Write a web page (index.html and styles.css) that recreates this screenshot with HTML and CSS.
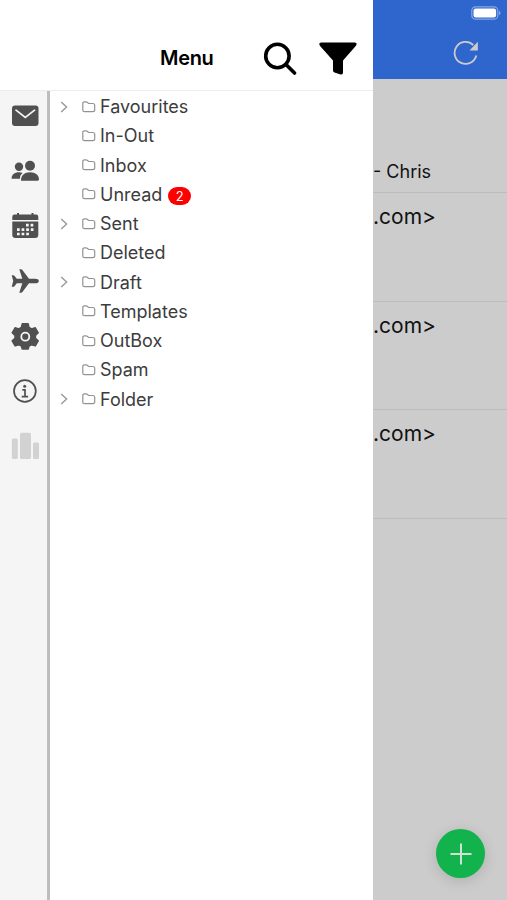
FILE: index.html
```
<!DOCTYPE html>
<html lang="en">
<head>
<meta charset="utf-8">
<title>Menu</title>
<link rel="stylesheet" href="styles.css">
</head>
<body>
<svg class="defs" aria-hidden="true">
  <symbol id="folder" viewBox="0 0 14 12"><path d="M.8 9.2V2.6Q.8.8 2.6.8H4q.8 0 1.3.5l.8.7q.6.5 1.4.5h3.3q1.9 0 1.9 1.9v4.4q0 1.9-1.9 1.9H2.6Q.8 10.700.8 9.200Z"/></symbol>
  <symbol id="chevron" viewBox="0 0 8 12"><path d="M1.200 1 6.600 6 1.200 11"/></symbol>
</svg>
<div class="screen">
  <aside class="drawer">
    <header class="head">
      <h1 class="title">Menu</h1>
      <svg class="search" viewBox="0 0 34 34"><circle cx="14.400" cy="14" r="11.700"/><path d="M23 22.500 31.500 31"/></svg>
      <svg class="filter" viewBox="0 0 38 33"><path d="M2.400.5H35.600Q38 .5 37.500 2.500 37.200 3.600 36.300 4.600L24 18.500V30.500Q24 33 21.500 32.400L15.500 30.600Q14 30 14 28.500V18.500L1.500 4.600Q.5 3.500.4 2.500 0 .5 2.400.5Z"/></svg>
    </header>
    <div class="body">
      <nav class="rail">
        <svg viewBox="0 0 28 28"><rect x="1" y="3.500" width="26.500" height="20.500" rx="3"/><path class="cut" d="m5 8.200 9.300 7.300L23.600 8.200"/></svg>
        <svg viewBox="0 0 28 28"><circle cx="8" cy="9.800" r="4.200"/><path d="M.6 21.700C.6 17.500 3.500 15.300 8 15.300q2.200 0 3.700.7C9.500 17.600 9 19.500 9 21.700Z"/><circle cx="19" cy="8.700" r="5"/><path d="M10 23.700C10 18.300 13.500 15.300 19 15.300s9 3 9 7q0 1.400-1.300 1.400Z"/></svg>
        <svg viewBox="0 0 28 28"><path d="M1.300 8V4.700Q1.300 2.500 3.500 2.500H6V1h2v1.500h12.500V1h2v1.500H25q2.300 0 2.300 2.200V8Z"/><path d="M1.300 9.500h26v13.300q0 3.200-3.200 3.200H4.500q-3.200 0-3.200-3.200Z"/><path class="days" d="M15 13.200h9M6 17.600h18M6 22h13.500"/></svg>
        <svg viewBox="0 0 28 28"><path d="M27.800 14q0 2.300-4 2.300H18l-6.600 8.800q-.5.700-1.300.7H8.300l3-9.500H5.800L3.400 19.200Q3 19.700 2.300 19.700H.7L2.200 14 .7 8.300h1.600q.7 0 1.100.5l2.400 2.900h5.500l-3-9.500h1.800q.8 0 1.300.7l6.600 8.800h5.800q4 0 4 2.300Z"/></svg>
        <svg viewBox="0 0 28 28"><path class="gear" d="M11.300 1.700h5.800l.9 3.800 2.600 1.500 3.700-1.200 2.900 5-2.800 2.600v2.900l2.800 2.600-2.900 5-3.700-1.200-2.600 1.500-.9 2.900h-5.800l-.9-2.900L7.800 22.700l-3.700 1.200-2.900-5L4 16.300v-2.900L1.200 10.800l2.900-5L7.800 7l2.600-1.500Z"/><circle class="hub" cx="14.300" cy="14.700" r="4"/></svg>
        <svg viewBox="0 0 28 28"><circle class="ring" cx="13.900" cy="14" r="10.900"/><circle cx="13.700" cy="9.300" r="1.500"/><path class="stem" d="M11.300 12.900h2.700v6.200M10.700 19.600h6.400"/></svg>
        <svg class="pale" viewBox="0 0 28 28"><rect x=".8" y="6.500" width="6" height="20.500" rx="1.500"/><rect x="9" y=".8" width="11" height="26.200" rx="1.500"/><rect x="22" y="10.500" width="6" height="16.500" rx="1.500"/></svg>
      </nav>
      <ul class="tree">
        <li><svg class="chev"><use href="#chevron"/></svg><svg class="fold"><use href="#folder"/></svg><span>Favourites</span></li>
        <li><i class="chev"></i><svg class="fold"><use href="#folder"/></svg><span>In-Out</span></li>
        <li><i class="chev"></i><svg class="fold"><use href="#folder"/></svg><span>Inbox</span></li>
        <li><i class="chev"></i><svg class="fold"><use href="#folder"/></svg><span>Unread</span><b class="badge">2</b></li>
        <li><svg class="chev"><use href="#chevron"/></svg><svg class="fold"><use href="#folder"/></svg><span>Sent</span></li>
        <li><i class="chev"></i><svg class="fold"><use href="#folder"/></svg><span>Deleted</span></li>
        <li><svg class="chev"><use href="#chevron"/></svg><svg class="fold"><use href="#folder"/></svg><span>Draft</span></li>
        <li><i class="chev"></i><svg class="fold"><use href="#folder"/></svg><span>Templates</span></li>
        <li><i class="chev"></i><svg class="fold"><use href="#folder"/></svg><span>OutBox</span></li>
        <li><i class="chev"></i><svg class="fold"><use href="#folder"/></svg><span>Spam</span></li>
        <li><svg class="chev"><use href="#chevron"/></svg><svg class="fold"><use href="#folder"/></svg><span>Folder</span></li>
      </ul>
    </div>
  </aside>
  <main class="page">
    <div class="bar">
      <svg class="battery" viewBox="0 0 30 14"><rect class="shell" x=".8" y=".8" width="26" height="12.400" rx="3.800"/><rect class="charge" x="2.500" y="2.500" width="22.600" height="9" rx="2.300"/><path class="tip" d="M28 4.800q1.600.8 1.600 2.200T28 9.200Z"/></svg>
      <svg class="refresh" viewBox="0 0 26 26"><path class="arc" d="M23.300 15.500A11 11 0 1 1 20.300 5"/><path class="arrow" d="M24.800 1.700V10.500H16.500Z"/></svg>
    </div>
    <div class="account">- Chris</div>
    <div class="mail">.com&gt;</div>
    <div class="mail">.com&gt;</div>
    <div class="mail">.com&gt;</div>
    <button class="add" aria-label="Add"><svg viewBox="0 0 22 22"><path d="M11 .5v21M.5 11h21"/></svg></button>
  </main>
</div>
</body>
</html>
```
FILE: styles.css
```
* { box-sizing: border-box; }
body { margin: 0; font-family: Inter, "Liberation Sans", sans-serif; }
svg { display: block; flex: none; }
.defs { position: absolute; width: 0; height: 0; }
.screen { display: flex; width: 507px; height: 900px; overflow: hidden; }

.drawer { display: flex; flex-direction: column; width: 373px; background: #fff; }
.head { display: flex; align-items: flex-start; height: 91px; padding: 42px 16px 0 160px; border-bottom: 1px solid #ececec; }
.title { width: 103px; margin: 4px 0 0; font-size: 20px; line-height: 25px; font-weight: 600; letter-spacing: -.3px; color: #000; }
.search { width: 34px; height: 34px; fill: none; stroke: #000; stroke-width: 3.600; stroke-linecap: round; }
.filter { width: 38px; height: 33px; margin-left: 22px; fill: #000; }
.body { display: flex; flex: 1; }

.rail { display: flex; flex-direction: column; gap: 27px; width: 50px; padding: 11px 0 0 11px; background: #f5f5f5; border-right: 3px solid #bdbdbd; }
.rail svg { width: 28px; height: 28px; fill: #505050; }
.rail .cut { fill: none; stroke: #f5f5f5; stroke-width: 1.700; stroke-linecap: round; }
.rail .days { fill: none; stroke: #f5f5f5; stroke-width: 2.700; stroke-dasharray: 2.700 1.900; }
.rail .gear { stroke: #505050; stroke-width: 1.500; stroke-linejoin: round; }
.rail .hub { stroke: #f5f5f5; stroke-width: 1.800; }
.rail .ring { fill: none; stroke: #505050; stroke-width: 1.700; }
.rail .stem { fill: none; stroke: #505050; stroke-width: 1.700; }
.rail .pale { fill: #d2d2d2; }

.tree { margin: 0; padding: 1px 0 0 10px; list-style: none; }
.tree li { display: flex; align-items: center; height: 29.250px; font-size: 18px; letter-spacing: 0; color: #3c3c3c; }
.chev { width: 8px; height: 12px; margin-right: 14px; fill: none; stroke: #999; stroke-width: 1.400; }
.fold { width: 14px; height: 12px; margin-right: 4px; fill: none; stroke: #929292; stroke-width: 1.200; }
.badge { width: 23px; height: 18px; margin: 3px 0 0 6px; border-radius: 9px; background: #f00; color: #fff; font-size: 13px; line-height: 18px; font-weight: 400; text-align: center; }

.page { display: flex; flex-direction: column; width: 134px; background: #ccc; color: #111; }
.bar { display: flex; flex-direction: column; align-items: flex-end; height: 79px; padding: 6px 6px 0 0; background: #2f66cd; }
.battery { width: 30px; height: 14px; }
.shell { fill: none; stroke: #88a7e4; stroke-width: 1.200; }
.charge { fill: #fff; }
.tip { fill: #88a7e4; }
.refresh { width: 26px; height: 26px; margin: 20px 22px 0 0; }
.arc { fill: none; stroke: #ccc; stroke-width: 1.800; }
.arrow { fill: #ccc; }
.account { height: 114px; padding-top: 81px; font-size: 18px; line-height: 24px; border-bottom: 1px solid #bcbcbc; }
.mail { height: 108.700px; padding-top: 11px; font-size: 21px; line-height: 26px; border-bottom: 1px solid #bcbcbc; }
.add { display: grid; place-items: center; width: 49px; height: 49px; margin: auto 22px 22px auto; padding: 0; border: 0; border-radius: 50%; background: #12b24d; box-shadow: 0 3px 14px rgba(0,0,0,.14); }
.add svg { width: 22px; height: 22px; fill: none; stroke: #d0e0d2; stroke-width: 2; }
```
